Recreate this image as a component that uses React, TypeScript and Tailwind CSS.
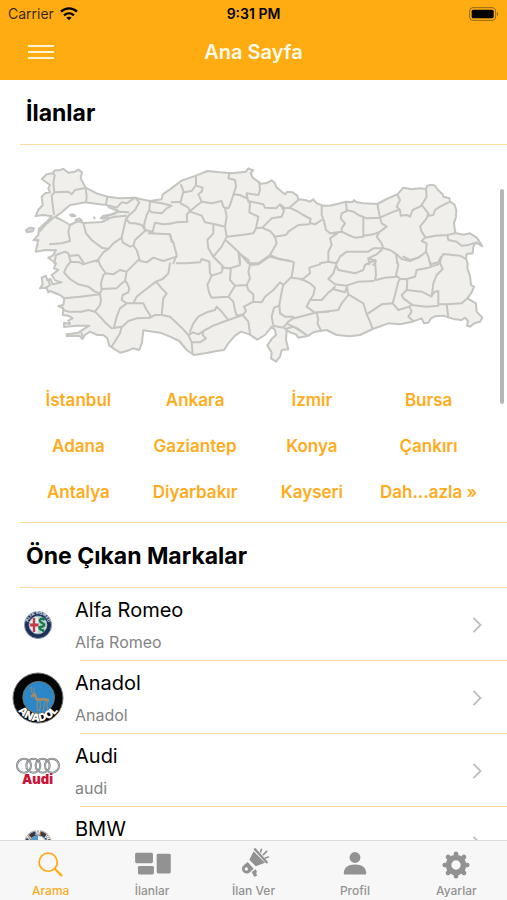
import React, { useState } from 'react';

// Map tiles: each one is a block of province borders drawn from its own origin
const BORDERS = [
  {
    origin: 'translate(0 0)',
    d: 'M98 55L104 60L100 85L103 112L145 110L155 118L165 105L197 99M103 112L95 122L98 150L102 178M197 98L200 125L198 142M262 125L258 148M268 152L290 158L305 142L320 145L345 128L358 142L345 165L328 180L318 192L330 205L345 205L365 210L375 225M270 180L295 170L325 172M265 190L285 185L318 182M390 138L388 165L380 180L372 210L375 225M388 165L395 172L425 175L440 160L455 152L425 145L395 140M375 225L398 230L405 203L430 208L450 206M378 225L345 255L340 272M386 235L450 238L455 260M318 192L310 225L305 248L308 262L330 275L340 272L350 285L360 318M190 205L198 235L215 255L245 278L265 282L280 265L305 248M150 210L145 230L150 258L125 265L90 268M265 282L250 292L230 320M103 325L108 300L135 290L145 295L148 303L175 300L190 322M145 295L152 320M360 318L380 322L400 308L430 318L470 305',
  },
  {
    origin: 'translate(0 300)',
    d: 'M152 20L178 22L190 28L215 20L235 15L240 30L250 45L258 55L250 60L243 85L245 105L240 115M152 20L140 35L132 52L150 72L175 88L205 95L225 110L240 115M133 130L180 125L240 118L243 135L240 150M130 165L145 170L185 170L205 165L225 170L240 150M225 170L240 185L258 205L275 220L305 215L300 235L275 275M258 55L280 58L300 45L320 50L315 78L305 85L290 100L245 102M320 50L335 35L355 15M450 25L445 55L428 72L408 80L375 105L350 125L340 145L320 145L305 135L308 120L325 112L328 100L320 82L315 78M408 80L425 100L440 115L430 130L425 180L405 180L390 188M340 145L370 145L380 165L390 180L390 188L350 190L325 198L305 217M320 145L300 160L290 185L282 217M425 180L450 185',
  },
  {
    origin: 'translate(450 0)',
    d: 'M33 90L42 112L65 108L78 90L78 62M40 110L32 140L5 142M32 145L55 158L60 168L50 180L52 200L20 202L0 206M78 92L98 98L95 110L85 118L95 140L60 168M95 140L125 145L155 138L160 155L165 160M178 55L175 70L195 75L198 95L190 120L180 150L175 160L165 158M190 118L210 120L230 130M230 125L230 115L265 120L270 105L268 82M230 118L235 140L240 145L238 172L265 185L258 220M235 138L280 148L285 158L318 160L330 148L345 160L358 158L385 135M60 170L95 182L105 202L135 208L165 215M165 160L170 185L165 215L170 245L155 275L130 305M130 208L130 235L112 255L115 280L130 305M170 245L215 240L250 235L258 220L275 218L300 228M330 148L342 168L335 185L305 190L280 215M358 158L380 168L400 180L422 192L418 208L385 210L355 230L348 240L312 245M422 205L435 208L455 195M300 228L315 245L320 265L300 300L265 325L235 325M170 258L205 290L235 325M205 290L210 325M300 300L325 312L360 318M130 305L150 325M0 238L5 255L10 262L20 300L10 325M20 325L50 325L90 322L95 312L118 320',
  },
  {
    origin: 'translate(450 300)',
    d: 'M118 20L120 55L125 62L155 52L160 35L150 25L130 5M155 38L180 40L210 30L208 0M125 62L112 90L118 115L125 128L175 125L195 92L180 75L182 42M215 0L235 15L240 30L235 50L240 70L230 90L195 92M240 30L265 28L298 5L360 18L372 22L365 65L340 90L330 82L310 105L285 125L275 142L250 140M230 90L235 105L250 118L250 140L222 155L228 168L220 178L200 182L195 165L190 140L175 125M60 230L70 205L85 185L110 172L135 165L140 155L155 170L175 195M218 180L175 195L130 212L100 228L98 240L108 250L90 262L65 262L55 240L35 218L0 185M55 240L70 232L85 238L98 230M65 262L68 298M218 180L235 200L240 235M340 90L335 110L328 150L330 175L345 185L370 185M328 152L312 158L305 185L310 212L340 218L355 200L372 188M365 68L395 72L420 85L435 98L430 120L420 135L410 155L430 170M372 190L410 180L440 172L475 170M440 172L445 195L442 205L452 224M345 222L370 215L410 240M355 208L385 222L410 240M395 75L420 55L418 38L450 28M425 135L455 135L478 110',
  },
  {
    origin: 'translate(900 0)',
    d: 'M5 152L5 180L12 198L18 225L30 235M78 140L80 168L65 175L62 190L75 205L65 220L65 230L30 235M80 165L100 170L115 180L140 190L180 188M65 230L85 240L105 248L130 245L130 185M172 147L180 188L185 205L200 215L180 230L160 238L130 242M180 188L215 172L235 165M232 118L240 135L230 155L240 165L242 182L260 180L270 185L278 165L300 155M318 102L320 125L305 150L325 175L320 190L300 215L305 230L315 245M305 150L300 155M325 182L340 180L345 165L360 155L390 140M315 248L345 242L382 240L405 235M382 240L385 255L410 260L425 272L445 270L470 262M178 232L170 245L185 265L190 280L160 280L145 290L80 290L60 305L50 325M30 235L52 235L30 250L35 270L25 290L25 320M315 248L305 258L320 265L318 290L300 305L270 318L245 312L230 298L210 285L190 280M318 290L325 305L330 325M185 285L170 298L145 310L168 318L160 330M228 298L232 325M438 312L420 302L370 297L362 312L360 325',
  },
  {
    origin: 'translate(900 300)',
    d: 'M0 25L25 20L50 25M50 20L48 30L55 45L105 55L130 45L135 30L165 15L168 60L165 75M48 30L40 55L25 72L45 88L80 92L115 80L160 78M168 75L195 68L230 65M232 20L235 30L228 60L240 72L260 72L285 65L290 45L325 38L355 28M145 10L148 28M250 5L270 15L295 8L305 0M330 20L332 35M358 20L368 42L350 60L340 85L335 125L305 110L260 105L262 80L258 72M332 28L355 22L363 5M80 92L85 118L130 145L140 178L150 200L158 222M30 110L38 102L75 112L80 98M38 102L45 95M85 120L65 145L55 165L0 172M140 178L185 148L218 145L225 120L235 80L240 72M218 145L235 165L268 155L275 148L250 130L245 120L260 105M275 150L320 155L355 152L355 108L345 110L335 122M355 148L380 148L425 145L442 130M380 148L385 187M268 155L275 170L265 185L280 198',
  },
];

const COUNTRY =
  'M65 72L80 58L98 55L104 46L118 46L130 41L145 53L165 50L175 44L186 52L182 70L197 98L230 115L262 125L300 130L345 128L360 132L390 138L425 133L428 118L450 103L485 77L528 62L562 48L600 52L635 55L678 50L685 40L700 46L692 54L698 68L708 75L722 86L740 84L755 76L765 85L768 95L785 110L795 118L802 110L818 112L832 122L835 133L855 135L870 140L880 133L890 145L910 152L930 152L978 140L998 141L1002 135L1008 141L1030 145L1072 147L1100 132L1132 118L1150 98L1175 103L1200 100L1218 102L1222 92L1235 89L1245 92L1252 103L1268 118L1270 125L1288 130L1290 140L1303 148L1309 165L1308 185L1302 205L1305 228L1308 235L1330 239L1350 235L1370 248L1380 262L1387 274L1375 266L1366 264L1360 275L1358 295L1340 297L1338 312L1343 325L1342 340L1350 362L1353 390L1362 395L1355 412L1342 430L1368 445L1370 470L1387 488L1380 500L1363 505L1350 515L1341 512L1344 498L1335 488L1325 495L1305 493L1285 487L1270 482L1245 484L1233 490L1225 503L1212 505L1205 490L1178 500L1140 508L1105 505L1058 522L1020 540L990 544L950 540L920 525L900 528L880 532L865 542L835 548L828 538L810 532L800 525L798 555L805 583L785 585L780 605L768 620L753 610L755 592L742 572L755 552L768 540L765 525L755 515L735 540L712 554L688 538L663 530L645 542L625 565L612 585L590 588L560 594L522 600L500 585L478 558L450 545L420 533L370 526L366 562L358 585L340 580L320 588L300 593L285 583L268 572L262 550L250 540L232 540L210 530L195 540L187 552L178 542L140 543L140 538L175 533L208 512L170 512L132 516L132 503L150 507L145 497L158 490L145 482L128 480L130 460L115 453L130 450L133 430L120 420L90 408L85 412L80 398L60 400L68 388L65 368L78 362L82 376L92 372L98 388L125 382L105 376L95 360L115 345L102 340L108 325L98 318L85 308L98 302L108 286L75 285L47 290L55 255L40 256L55 240L57 222L75 205L95 184L70 180L47 183L55 165L68 150L65 125L75 115L90 112L85 100L90 90Z';

const MARMARA =
  'M105 186L125 172L150 150L165 148L195 142L240 148L262 150L268 158L295 168L280 178L250 182L242 190L265 192L245 201L190 204L175 198L150 210L125 195Z';

const cities = [
  'İstanbul', 'Ankara', 'İzmir', 'Bursa',
  'Adana', 'Gaziantep', 'Konya', 'Çankırı',
  'Antalya', 'Diyarbakır', 'Kayseri', 'Dah...azla »',
];

const TurkeyMap: React.FC = () => (
  <svg viewBox="0 0 1461 645" className="block w-full" role="img" aria-label="Türkiye">
    <g stroke="#c4c4c1" strokeWidth="6" strokeLinejoin="round" strokeLinecap="round" fill="none">
      <path d={COUNTRY} fill="#f0efec" />
      <path d={MARMARA} fill="#fff" />
      {BORDERS.map((tile) => (
        <path key={tile.origin} d={tile.d} transform={tile.origin} />
      ))}
      <path d="M18 226L28 218L42 220L38 229L22 232Z" fill="#d8d8d5" />
      <path d="M150 180L160 178L166 183L156 184ZM166 194L178 190L186 197L174 199ZM222 188L224 190M60 228L78 208L100 188M84 372L90 390L78 398M184 534L190 548M248 188L264 184" />
    </g>
  </svg>
);

const AlfaLogo: React.FC = () => (
  <svg viewBox="0 0 60 60" className="size-7" aria-hidden="true">
    <defs>
      <path id="alfaArc" d="M9 33A21.5 21.5 0 1 1 51 33" />
    </defs>
    <circle cx="30" cy="30" r="29" fill="#1c3158" stroke="#8b94a5" strokeWidth="2" />
    <circle cx="30" cy="30" r="19" fill="#e9eeee" stroke="#aab2bb" strokeWidth="2" />
    <path d="M30 12A18 18 0 0 1 30 48Z" fill="#b9d5c7" />
    <path d="M19 15h5v12h7v6h-7v12h-5V33h-6v-6h6Z" fill="#c9374a" />
    <path d="M44 19c-8-6-13 1-8 5s10 4 6 8-13 0-8 6 9 0 7 7" fill="none" stroke="#16784f" strokeWidth="5" />
    <text fill="#e4e8ef" fontSize="9" fontWeight="700" fontFamily="Inter, sans-serif">
      <textPath href="#alfaArc" startOffset="50%" textAnchor="middle">ALFA ROMEO</textPath>
    </text>
  </svg>
);

const AnadolLogo: React.FC = () => (
  <svg viewBox="0 0 156 156" className="size-13" aria-hidden="true">
    <defs>
      <path id="anadolArc" d="M6 76A72 72 0 0 0 150 76" />
    </defs>
    <circle cx="78" cy="78" r="75" fill="#050505" stroke="#777" strokeWidth="3" />
    <circle cx="80" cy="76" r="48" fill="#2c86c8" stroke="#8a7a50" strokeWidth="2" />
    <g fill="none" stroke="#a08c68" strokeLinecap="round" strokeLinejoin="round">
      <path d="M58 46c-3 9 0 16 7 20M66 48c-2 8 0 13 3 16" strokeWidth="3" />
      <path d="M60 72l8-5 6 14M76 83l24-1 8 3" strokeWidth="8" />
      <path d="M77 86l-2 14 3 16M84 88l1 14-2 14M100 86l-4 14-2 16M106 87l-1 13 3 16" strokeWidth="3" />
    </g>
    <text fill="#fff" fontSize="32" fontWeight="900" fontFamily="Inter, sans-serif">
      <textPath href="#anadolArc" startOffset="50%" textAnchor="middle">ANADOL</textPath>
    </text>
  </svg>
);

const AudiLogo: React.FC = () => (
  <div className="flex w-11 flex-col items-center">
    <svg viewBox="0 0 132 52" className="w-full" fill="none" aria-hidden="true">
      {[24, 52, 80, 108].map((cx) => (
        <g key={cx}>
          <circle cx={cx} cy="26" r="21" stroke="#777b7d" strokeWidth="6" />
          <circle cx={cx} cy="26" r="21" stroke="#d8dadb" strokeWidth="2" />
        </g>
      ))}
    </svg>
    <span className="font-['Inter',sans-serif] text-[13px] leading-[10px] font-black text-[#cc1236]">Audi</span>
  </div>
);

const BmwLogo: React.FC = () => (
  <svg viewBox="0 0 84 84" className="size-7" aria-hidden="true">
    <circle cx="42" cy="42" r="40" fill="#38393b" stroke="#aaa" strokeWidth="4" />
    <circle cx="42" cy="42" r="25" fill="#f5f5f5" stroke="#bbb" strokeWidth="3" />
    <path d="M42 42V17A25 25 0 0 0 17 42ZM42 42V67A25 25 0 0 0 67 42Z" fill="#4e9bd0" />
    <g fill="#fff" fontSize="17" fontWeight="700" fontFamily="Inter, sans-serif" textAnchor="middle">
      <text x="16" y="28" transform="rotate(-45 16 24)">B</text>
      <text x="42" y="15">M</text>
      <text x="68" y="28" transform="rotate(45 68 24)">W</text>
    </g>
  </svg>
);

const brands = [
  { name: 'Alfa Romeo', detail: 'Alfa Romeo', Logo: AlfaLogo },
  { name: 'Anadol', detail: 'Anadol', Logo: AnadolLogo },
  { name: 'Audi', detail: 'audi', Logo: AudiLogo },
  { name: 'BMW', detail: 'BMW', Logo: BmwLogo },
];

const tabs = [
  {
    label: 'Arama',
    icon: (
      <g fill="none" stroke="currentColor" strokeLinecap="round">
        <circle cx="13" cy="13" r="9.7" strokeWidth="1.9" />
        <path d="M20 20l7 7" strokeWidth="2.6" />
      </g>
    ),
  },
  {
    label: 'İlanlar',
    icon: (
      <g fill="currentColor">
        <rect x="-2" y="3" width="19" height="11" rx="1.5" />
        <rect x="1" y="17" width="17" height="9" rx="1.5" />
        <rect x="21" y="4" width="15" height="21" rx="1.5" />
      </g>
    ),
  },
  {
    label: 'İlan Ver',
    icon: (
      <g fill="currentColor" transform="scale(.3556) translate(-6 -18)">
        <path d="M50 22L84 56L56 67L37 47Z" />
        <path d="M54 16l35 39" stroke="currentColor" strokeWidth="7" strokeLinecap="round" />
        <path d="M32 54L50 74L36 87Q24 92 17 82Q11 71 21 63Z" />
        <circle cx="28" cy="75" r="5" fill="#f7f7f7" />
        <path d="M44 84l12-8 4 8-3 4 4 6-9 5Z" />
        <path d="M71 24l2-8M79 32l10-10M85 42l9-3" stroke="currentColor" strokeWidth="5" strokeLinecap="round" />
      </g>
    ),
  },
  {
    label: 'Profil',
    icon: (
      <g fill="currentColor">
        <circle cx="16" cy="8" r="5.8" />
        <path d="M4 25c0-6 4.500-9.500 12-9.500S28 19 28 25c0 .7-.4 1-1 1H5c-.6 0-1-.3-1-1Z" />
      </g>
    ),
  },
  {
    label: 'Ayarlar',
    icon: (
      <g stroke="currentColor" fill="none" strokeLinecap="round">
        <circle cx="16" cy="16" r="8" strokeWidth="6" />
        <path
          d="M16 4V7M16 25v3M4 16H7M25 16h3M7.500 7.500l2 2M22.500 22.500l2 2M24.500 7.500l-2 2M9.500 22.500l-2 2"
          strokeWidth="5"
        />
      </g>
    ),
  },
];

const SectionTitle: React.FC<{ children: React.ReactNode }> = ({ children }) => (
  <div className="ml-5 flex h-[65px] items-center border-b border-[#ffdda0] pt-0.5 pl-1.5">
    <h2 className="text-[23px] font-bold text-black">{children}</h2>
  </div>
);

const App: React.FC = () => {
  const [active, setActive] = useState('Arama');

  return (
    <div className="relative flex h-screen flex-col overflow-hidden bg-white font-['Inter','Liberation_Sans',sans-serif]">
      <header className="shrink-0 bg-[#ffac13]">
        <div className="grid h-7 grid-cols-3 items-center px-2 text-sm text-black">
          <div className="flex items-center gap-1.5 text-black/80">
            <span>Carrier</span>
            <svg viewBox="0 0 54 42" className="w-[18px]" fill="none" stroke="#000" strokeWidth="7" aria-hidden="true">
              <path d="M3 14C17 1 37 1 51 14M12 25C21 17 33 17 42 25" />
              <path d="M19 32Q27 26 35 32L27 40Z" fill="#000" stroke="none" />
            </svg>
          </div>
          <span className="text-center font-semibold">9:31 PM</span>
          <svg viewBox="0 0 90 42" className="w-[30px] justify-self-end" aria-hidden="true">
            <rect x="2" y="2" width="78" height="38" rx="10" fill="none" stroke="#94661a" strokeWidth="3" />
            <rect x="8" y="8" width="66" height="26" rx="5" fill="#000" />
            <path d="M84 14q7 7 0 14Z" fill="#94661a" />
          </svg>
        </div>
        <div className="grid h-13 grid-cols-3 items-center px-7 pb-1">
          <button type="button" aria-label="Menü" className="flex w-[26px] flex-col gap-1">
            <span className="h-0.5 w-full bg-[#fff3d8]" />
            <span className="h-0.5 w-full bg-[#fff3d8]" />
            <span className="h-0.5 w-full bg-[#fff3d8]" />
          </button>
          <h1 className="text-center text-xl font-semibold text-[#fffbea]">Ana Sayfa</h1>
        </div>
      </header>

      <main className="min-h-0 flex-1 overflow-y-auto [scrollbar-width:none]">
        <SectionTitle>İlanlar</SectionTitle>
        <section className="ml-5 border-b border-[#ffdda0] pt-2.5 pb-1.5">
          <TurkeyMap />
          <div className="grid grid-cols-4 pt-2 pr-5">
            {cities.map((city) => (
              <button key={city} type="button" className="h-[46px] text-[17px] font-semibold whitespace-nowrap text-[#ffac1c]">
                {city}
              </button>
            ))}
          </div>
        </section>

        <SectionTitle>Öne Çıkan Markalar</SectionTitle>
        <ul>
          {brands.map(({ name, detail, Logo }) => (
            <li key={name}>
              <a href="#" className="flex h-[73px] items-stretch">
                <div className="flex w-[75px] shrink-0 items-center justify-center">
                  <Logo />
                </div>
                <div className="relative flex flex-1 items-center justify-between pr-6">
                  <div className="pt-0.5">
                    <div className="text-xl leading-8 text-black">{name}</div>
                    <div className="text-base leading-8 text-[#838383]">{detail}</div>
                  </div>
                  <svg viewBox="0 0 12 18" className="h-4 w-3" fill="none" stroke="#bdbdc0" strokeWidth="2" aria-hidden="true">
                    <path d="M2 1l8 8-8 8" />
                  </svg>
                  <span className="absolute right-0 bottom-0 left-[5px] h-px bg-[#ffd999]" />
                </div>
              </a>
            </li>
          ))}
        </ul>
      </main>

      <span className="absolute top-[189px] right-[3px] h-[215px] w-1 rounded-full bg-[#b6b6b6]" />

      <nav className="flex h-15 shrink-0 border-t border-[#dcdcdc] bg-[#f7f7f7]">
        {tabs.map((tab) => (
          <button
            key={tab.label}
            type="button"
            onClick={() => setActive(tab.label)}
            className={`flex flex-1 flex-col items-center gap-[3px] pt-[9px] text-xs font-medium ${
              active === tab.label ? 'text-[#ffac1c]' : 'text-[#929292]'
            }`}
          >
            <svg viewBox="0 0 32 32" className="size-[30px] overflow-visible" aria-hidden="true">
              {tab.icon}
            </svg>
            <span>{tab.label}</span>
          </button>
        ))}
      </nav>
    </div>
  );
};

export default App;
